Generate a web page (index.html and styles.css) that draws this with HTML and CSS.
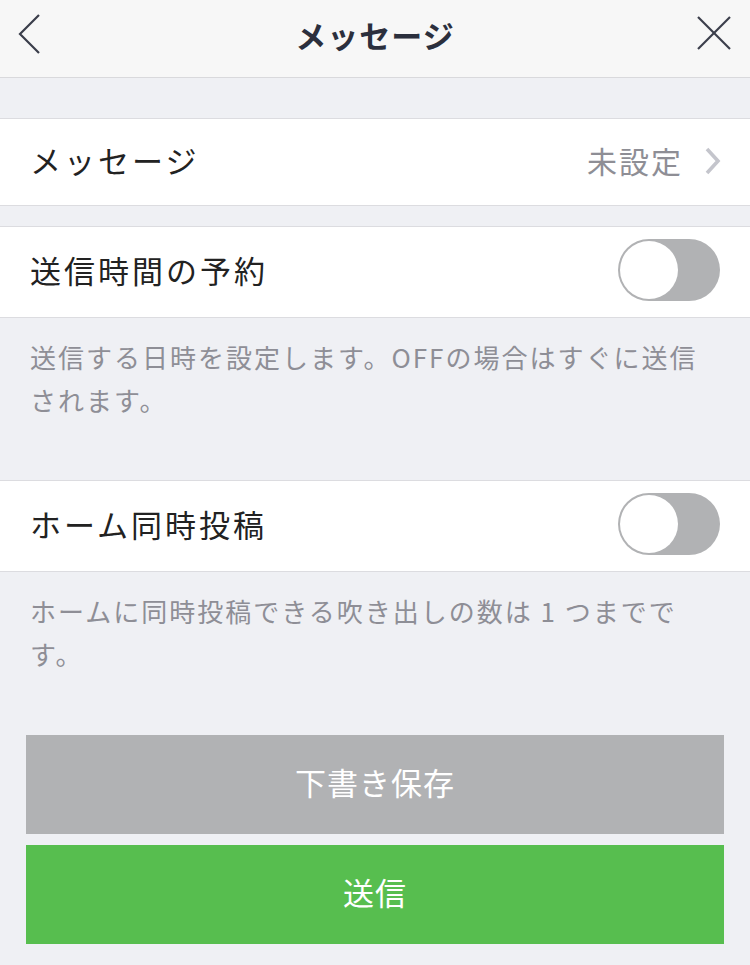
FILE: index.html
```html
<!DOCTYPE html>
<html>
    <head>
        <meta charset="utf-8" />
        <title>メッセージ</title>
        <link rel="stylesheet" href="styles.css">
    </head>

    <body>
        <!-- ヘッダー -->
        <div class="header">
            <div class="header-side">
                <svg class="icon-back" width="24" height="42" viewBox="0 0 24 42">
                    <polyline points="21,2 2,21 21,40" fill="none" stroke="#3b3e4b" stroke-width="2.2" />
                </svg>
            </div>
            <div class="header-title">メッセージ</div>
            <div class="header-side right">
                <svg class="icon-close" width="36" height="36" viewBox="0 0 36 36">
                    <line x1="2" y1="2" x2="34" y2="34" stroke="#3b3e4b" stroke-width="2.2" />
                    <line x1="34" y1="2" x2="2" y2="34" stroke="#3b3e4b" stroke-width="2.2" />
                </svg>
            </div>
        </div>

        <div class="content">
            <div class="row row-first">
                <div class="row-label">メッセージ</div>
                <div class="row-value">
                    未設定
                    <svg class="icon-chevron" width="18" height="30" viewBox="0 0 18 30">
                        <polyline points="3,3 14,15 3,27" fill="none" stroke="#c4c5cc" stroke-width="3.6" />
                    </svg>
                </div>
            </div>

            <div class="row row-tall">
                <div class="row-label">送信時間の予約</div>
                <div class="toggle"><div class="knob"></div></div>
            </div>
            <div class="note">送信する日時を設定します。OFFの場合はすぐに送信されます。</div>

            <div class="row row-tall">
                <div class="row-label">ホーム同時投稿</div>
                <div class="toggle"><div class="knob"></div></div>
            </div>
            <div class="note">ホームに同時投稿できる吹き出しの数は 1 つまでです。</div>

            <div class="buttons">
                <div class="btn btn-draft">下書き保存</div>
                <div class="btn btn-send">送信</div>
            </div>
        </div>
    </body>
</html>
```

FILE: styles.css
```css
body {
    margin: 0;
    background: #eff0f4;
    font-family: "Noto Sans CJK JP", "Noto Sans", sans-serif;
    width: 750px;
    height: 965px;
    overflow: hidden;
}

.header {
    height: 77px;
    background: #f7f7f7;
    border-bottom: 1px solid #d9d9dc;
    display: flex;
    align-items: center;
}

.header-side {
    width: 120px;
    display: flex;
    align-items: center;
    padding-left: 18px;
}

.header-side.right {
    justify-content: flex-end;
    padding-left: 0;
    padding-right: 18px;
}

.icon-back {
    margin-top: -9px;
}

.icon-close {
    margin-top: -12px;
}

.header-title {
    flex: 1;
    text-align: center;
    font-size: 31px;
    font-weight: bold;
    color: #2b2f3d;
    letter-spacing: 1px;
    margin-top: -8px;
}

.content {
    padding-top: 40px;
}

.row {
    background: #fff;
    border-top: 1px solid #dcdce0;
    border-bottom: 1px solid #dcdce0;
    display: flex;
    align-items: center;
    justify-content: space-between;
    padding: 0 30px;
}

.row-first {
    height: 86px;
    margin-bottom: 20px;
}

.row-tall {
    height: 90px;
}

.row-label {
    font-size: 31px;
    letter-spacing: 3px;
    color: #222;
    margin-top: -5px;
}

.row-value {
    display: flex;
    align-items: center;
    font-size: 30px;
    letter-spacing: 2px;
    color: #8e8e95;
    margin-right: -2px;
    margin-top: -4px;
}

.icon-chevron {
    margin-left: 21px;
    margin-top: 2px;
}

.toggle {
    width: 102px;
    height: 62px;
    border-radius: 31px;
    background: #b1b2b4;
    position: relative;
    margin-top: -4px;
}

.knob {
    position: absolute;
    left: 2px;
    top: 2px;
    width: 58px;
    height: 58px;
    border-radius: 50%;
    background: #fff;
}

.note {
    font-size: 26px;
    line-height: 43px;
    letter-spacing: 2px;
    color: #8e8e96;
    padding: 17px 40px 59px 30px;
}

.buttons {
    padding: 1px 26px 0;
    display: flex;
    flex-direction: column;
    gap: 11px;
}

.btn {
    height: 99px;
    padding-bottom: 6px;
    box-sizing: border-box;
    display: flex;
    align-items: center;
    justify-content: center;
    font-size: 31px;
    letter-spacing: 1px;
    color: #fff;
}

.btn-draft {
    background: #b1b2b4;
}

.btn-send {
    background: #57be4f;
}
```
